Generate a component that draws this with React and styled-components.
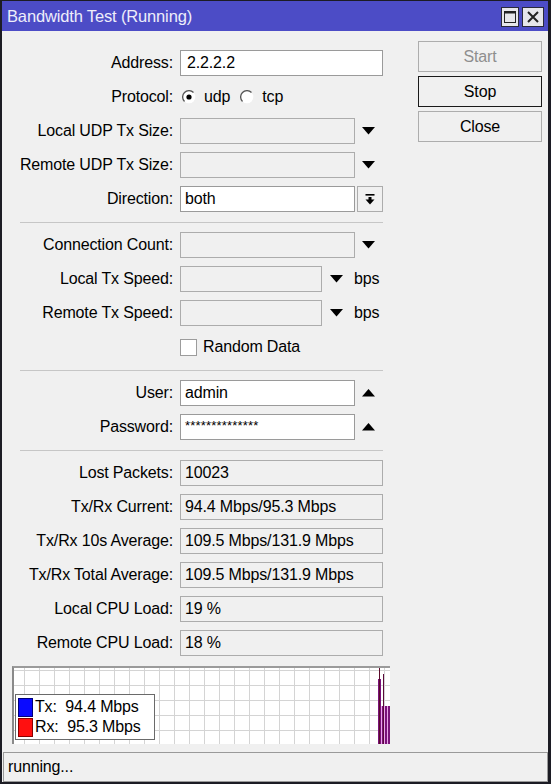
import React from "react";
import styled, { createGlobalStyle } from "styled-components";

const GlobalStyle = createGlobalStyle`
    html, body {
        margin: 0;
        padding: 0;
        background: #f0f0f0;
    }
    body {
        font-family: "Liberation Sans", Arial, sans-serif;
        font-size: 16px;
        letter-spacing: -0.15px;
        color: #000;
    }
`;

const Window = styled.div`
    width: 551px;
    height: 784px;
    box-sizing: border-box;
    display: flex;
    flex-direction: column;
    background: #f0f0f0;
    border-style: solid;
    border-color: #1c1c24;
    border-width: 1px 3px 2px 2px;
`;

const TitleBar = styled.div`
    height: 30px;
    flex-shrink: 0;
    display: flex;
    align-items: center;
    justify-content: space-between;
    background: #4c4cc6;
    padding: 1px 4px 0 5px;
    box-sizing: border-box;
`;

const Title = styled.div`
    color: #eeeefa;
    font-size: 16.5px;
`;

const TitleButtons = styled.div`
    display: flex;
    gap: 3px;
`;

const TitleButton = styled.div`
    width: ${(p) => p.$w}px;
    height: 20px;
    box-sizing: border-box;
    border: 1px solid #2a2a3a;
    background: #e6e6ea;
    display: flex;
    align-items: center;
    justify-content: center;
`;

const Body = styled.div`
    flex: 1;
    display: flex;
    padding-top: 15px;
`;

const FormColumn = styled.div`
    width: 404px;
    padding-left: 10px;
    box-sizing: border-box;
`;

const ButtonColumn = styled.div`
    display: flex;
    flex-direction: column;
    gap: 4px;
    margin-top: -5px;
    margin-left: 12px;
    width: 124px;
`;

const Button = styled.div`
    height: 31px;
    box-sizing: border-box;
    border: 1px solid ${(p) => (p.$focused ? "#1a1a1a" : "#adadad")};
    background: #f0f0f0;
    color: ${(p) => (p.$disabled ? "#8e8e8e" : "#000")};
    display: flex;
    align-items: center;
    justify-content: center;
    font-size: 16px;
`;

const Row = styled.div`
    height: 34px;
    display: flex;
    align-items: center;
`;

const Label = styled.div`
    width: 161px;
    text-align: right;
    margin-right: 7px;
    white-space: nowrap;
`;

const Field = styled.div`
    width: ${(p) => p.$w || 203}px;
    height: 26px;
    box-sizing: border-box;
    border: 1px solid ${(p) => (p.$white ? "#9a9a9a" : "#acacac")};
    background: ${(p) => (p.$white ? "#fff" : "#f0f0f0")};
    padding-left: ${(p) => p.$pad || 4}px;
    display: flex;
    align-items: center;
    font-size: 16px;
    white-space: nowrap;
    overflow: hidden;
`;

const PasswordText = styled.span`
    font-size: 13px;
    letter-spacing: 0.2px;
    position: relative;
    top: -2px;
`;

const ArrowSlot = styled.div`
    margin-left: ${(p) => p.$ml}px;
    display: flex;
    align-items: center;
`;

const DirButton = styled.div`
    width: 26px;
    height: 26px;
    box-sizing: border-box;
    margin-left: 2px;
    border: 1px solid #acacac;
    background: #f0f0f0;
    display: flex;
    align-items: center;
    justify-content: center;
`;

const Unit = styled.span`
    margin-left: ${(p) => p.$ml}px;
`;

const RadioGroup = styled.div`
    display: flex;
    align-items: center;
    padding-left: 2px;
`;

const RadioText = styled.span`
    margin-left: 8px;
    margin-right: ${(p) => p.$mr || 0}px;
`;

const CheckBox = styled.div`
    width: 17px;
    height: 17px;
    box-sizing: border-box;
    border: 1px solid #9c9c9c;
    background: #fff;
`;

const CheckText = styled.span`
    margin-left: 6px;
`;

const Separator = styled.div`
    height: 12px;
    margin-left: 8px;
    width: 363px;
    display: flex;
    align-items: center;
    &::after {
        content: "";
        display: block;
        width: 100%;
        height: 1px;
        background: #c6c6c6;
    }
`;

const Graph = styled.div`
    position: relative;
    margin-top: 6px;
    width: 378px;
    height: 78px;
    box-sizing: border-box;
    border-top: 2px solid #9a9a9a;
    border-left: 2px solid #8a8a8a;
    background-color: #fff;
    background-image: linear-gradient(to right, #d4d4d4 1px, transparent 1px),
        linear-gradient(to bottom, #d4d4d4 1px, transparent 1px);
    background-size: 15px 15px;
    background-position: 10px 2px;
`;

const Legend = styled.div`
    position: absolute;
    left: 1px;
    top: 26px;
    width: 140px;
    height: 46px;
    box-sizing: border-box;
    border: 1px solid #6a6a6a;
    background: #fff;
    padding: 2px 0 0 2px;
    display: flex;
    flex-direction: column;
`;

const LegendRow = styled.div`
    display: flex;
    align-items: center;
    height: 20px;
    font-size: 16px;
`;

const Swatch = styled.div`
    width: 15px;
    height: 19px;
    margin-right: 2px;
    background: ${(p) => p.$color};
    border: 1px solid ${(p) => p.$edge};
    box-sizing: border-box;
`;

const Bars = styled.svg`
    position: absolute;
    left: 362px;
    top: 0;
`;

const StatusBar = styled.div`
    margin: 7px 0 0 1px;
    height: 30px;
    box-sizing: border-box;
    border: 1px solid #9a9a9a;
    display: flex;
    align-items: center;
    padding-left: 4px;
    font-size: 16px;
`;

const DownArrow = () => (
    <svg width="13" height="8" viewBox="0 0 13 8">
        <polygon points="0,0 13,0 6.5,7.5" fill="#000" />
    </svg>
);

const UpArrow = () => (
    <svg width="13" height="8" viewBox="0 0 13 8">
        <polygon points="0,7.5 13,7.5 6.5,0" fill="#000" />
    </svg>
);

const DropBarIcon = () => (
    <svg width="10" height="11" viewBox="0 0 10 11">
        <rect x="0.5" y="0" width="9" height="1.6" fill="#000" />
        <rect x="3.5" y="3" width="3" height="3" fill="#000" />
        <polygon points="0.5,5.5 9.5,5.5 5,10.5" fill="#000" />
    </svg>
);

const Radio = ({ checked }) => (
    <svg width="14" height="14" viewBox="0 0 14 14">
        <circle cx="7" cy="7" r="6.3" fill="#fff" />
        <path d="M11.5 2.5 A6.3 6.3 0 0 0 2.5 11.5" stroke="#555" strokeWidth="1.3" fill="none" />
        {checked && <circle cx="7" cy="7" r="2.6" fill="#000" />}
    </svg>
);

const MaxIcon = () => (
    <svg width="12" height="12" viewBox="0 0 12 12">
        <rect x="0.5" y="0.5" width="11" height="11" fill="none" stroke="#222" strokeWidth="1" />
        <rect x="0.5" y="0.5" width="11" height="2" fill="#222" />
    </svg>
);

const CloseIcon = () => (
    <svg width="12" height="12" viewBox="0 0 12 12">
        <path d="M1 1 L11 11 M11 1 L1 11" stroke="#222" strokeWidth="2" />
    </svg>
);

const FormRow = ({ label, children }) => (
    <Row>
        <Label>{label}:</Label>
        {children}
    </Row>
);

const stats = [
    ["Lost Packets", "10023"],
    ["Tx/Rx Current", "94.4 Mbps/95.3 Mbps"],
    ["Tx/Rx 10s Average", "109.5 Mbps/131.9 Mbps"],
    ["Tx/Rx Total Average", "109.5 Mbps/131.9 Mbps"],
    ["Local CPU Load", "19 %"],
    ["Remote CPU Load", "18 %"],
];

const App = () => {
    return (
        <>
            <GlobalStyle />
            <Window>
                <TitleBar>
                    <Title>Bandwidth Test (Running)</Title>
                    <TitleButtons>
                        <TitleButton $w={18}>
                            <MaxIcon />
                        </TitleButton>
                        <TitleButton $w={22}>
                            <CloseIcon />
                        </TitleButton>
                    </TitleButtons>
                </TitleBar>
                <Body>
                    <FormColumn>
                        <FormRow label="Address">
                            <Field $white $pad={6}>
                                2.2.2.2
                            </Field>
                        </FormRow>
                        <FormRow label="Protocol">
                            <RadioGroup>
                                <Radio checked />
                                <RadioText $mr={10}>udp</RadioText>
                                <Radio />
                                <RadioText>tcp</RadioText>
                            </RadioGroup>
                        </FormRow>
                        <FormRow label="Local UDP Tx Size">
                            <Field $w={175} />
                            <ArrowSlot $ml={7}>
                                <DownArrow />
                            </ArrowSlot>
                        </FormRow>
                        <FormRow label="Remote UDP Tx Size">
                            <Field $w={175} />
                            <ArrowSlot $ml={7}>
                                <DownArrow />
                            </ArrowSlot>
                        </FormRow>
                        <FormRow label="Direction">
                            <Field $w={175} $white>
                                both
                            </Field>
                            <DirButton>
                                <DropBarIcon />
                            </DirButton>
                        </FormRow>
                        <Separator />
                        <FormRow label="Connection Count">
                            <Field $w={175} />
                            <ArrowSlot $ml={7}>
                                <DownArrow />
                            </ArrowSlot>
                        </FormRow>
                        <FormRow label="Local Tx Speed">
                            <Field $w={142} />
                            <ArrowSlot $ml={8}>
                                <DownArrow />
                            </ArrowSlot>
                            <Unit $ml={11}>bps</Unit>
                        </FormRow>
                        <FormRow label="Remote Tx Speed">
                            <Field $w={142} />
                            <ArrowSlot $ml={8}>
                                <DownArrow />
                            </ArrowSlot>
                            <Unit $ml={11}>bps</Unit>
                        </FormRow>
                        <Row>
                            <Label />
                            <CheckBox />
                            <CheckText>Random Data</CheckText>
                        </Row>
                        <Separator />
                        <FormRow label="User">
                            <Field $w={175} $white>
                                admin
                            </Field>
                            <ArrowSlot $ml={7}>
                                <UpArrow />
                            </ArrowSlot>
                        </FormRow>
                        <FormRow label="Password">
                            <Field $w={175} $white>
                                <PasswordText>**************</PasswordText>
                            </Field>
                            <ArrowSlot $ml={7}>
                                <UpArrow />
                            </ArrowSlot>
                        </FormRow>
                        <Separator />
                        {stats.map(([label, value]) => (
                            <FormRow key={label} label={label}>
                                <Field>{value}</Field>
                            </FormRow>
                        ))}
                        <Graph>
                            <Legend>
                                <LegendRow>
                                    <Swatch $color="#0a0aff" $edge="#00007a" />
                                    Tx:&nbsp; 94.4 Mbps
                                </LegendRow>
                                <LegendRow>
                                    <Swatch $color="#ff1010" $edge="#8a0000" />
                                    Rx:&nbsp; 95.3 Mbps
                                </LegendRow>
                            </Legend>
                            <Bars width="16" height="76" viewBox="0 0 16 76">
                                <rect x="2" y="11" width="3" height="65" fill="#7a127a" />
                                <rect x="3" y="0" width="1" height="76" fill="#5a0a2a" />
                                <rect x="6" y="38" width="2" height="38" fill="#7a127a" />
                                <rect x="7" y="6" width="1" height="70" fill="#5a0a3a" />
                                <rect x="9" y="38" width="2" height="38" fill="#7a127a" />
                                <rect x="12" y="38" width="2" height="38" fill="#7a127a" />
                                <rect x="5" y="38" width="1" height="38" fill="#e9a6e9" />
                                <rect x="8" y="38" width="1" height="38" fill="#e9a6e9" />
                                <rect x="11" y="38" width="1" height="38" fill="#e9a6e9" />
                            </Bars>
                        </Graph>
                    </FormColumn>
                    <ButtonColumn>
                        <Button $disabled>Start</Button>
                        <Button $focused>Stop</Button>
                        <Button>Close</Button>
                    </ButtonColumn>
                </Body>
                <StatusBar>running...</StatusBar>
            </Window>
        </>
    );
};

export default App;
